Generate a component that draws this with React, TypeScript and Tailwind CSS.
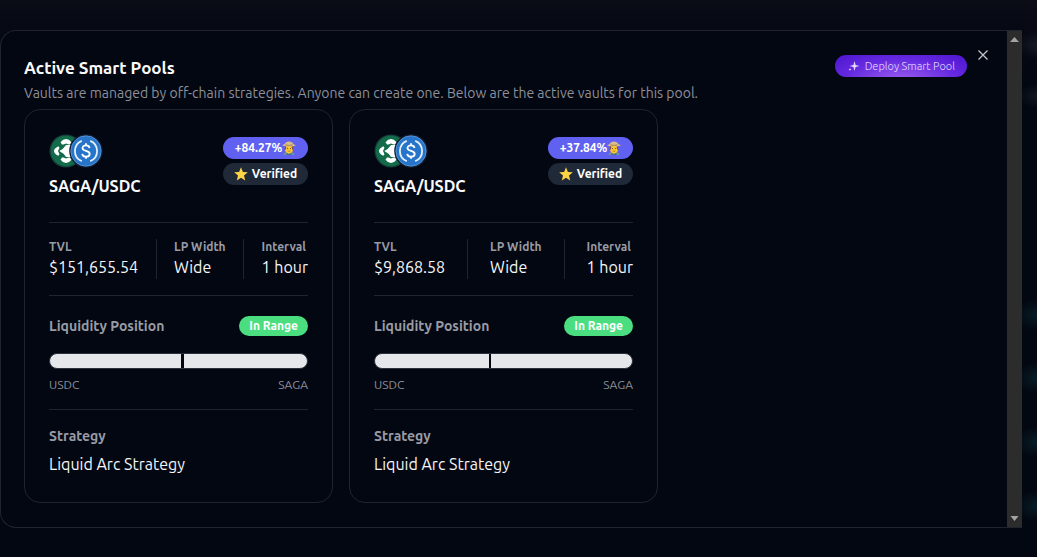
import React from "react";

type Pool = {
  id: string;
  pair: string;
  apr: string;
  tvl: string;
  width: string;
  interval: string;
  base: string;
  quote: string;
  price: number;
  marker: number;
  strategy: string;
};

const pools: Pool[] = [
  { id: "a", pair: "SAGA/USDC", apr: "+84.27%", tvl: "$151,655.54", width: "Wide", interval: "1 hour", base: "USDC", quote: "SAGA", price: 51, marker: 3, strategy: "Liquid Arc Strategy" },
  { id: "b", pair: "SAGA/USDC", apr: "+37.84%", tvl: "$9,868.58", width: "Wide", interval: "1 hour", base: "USDC", quote: "SAGA", price: 44.4, marker: 2, strategy: "Liquid Arc Strategy" },
];

function SagaLogo() {
  return (
    <svg viewBox="0 0 34 34" className="size-[34px] shrink-0" aria-hidden="true">
      <circle cx="17" cy="17" r="16.5" fill="#173f3b" />
      <circle cx="17" cy="17" r="15.2" fill="#136c49" />
      <path d="M11.500 8.300Q14 5 17 5t5.500 3.300L21 10.500h-1.500L17 9.500l-2.500 1H13Z" fill="#fff" />
      <path d="M11.500 25.700Q14 29 17 29t5.500-3.300L21 23.500h-1.500L17 24.500l-2.500-1H13Z" fill="#fff" />
      <path d="M9.300 12.200Q5 14.500 5 17t4.300 4.800l1.200-1.600L9 17l1.500-3.200Z" fill="#fff" />
      <path d="M17 11h5.500v12H17Q14.500 19 10.300 17 14.500 15 17 11Z" fill="#fff" />
      <path d="M24.700 12.200Q29 14.500 29 17t-4.300 4.800Z" fill="#fff" />
    </svg>
  );
}

function UsdcLogo() {
  return (
    <svg viewBox="0 0 34 34" className="-ml-[14px] size-[34px] shrink-0" aria-hidden="true">
      <circle cx="17" cy="17" r="16.800" fill="#111d31" />
      <circle cx="17" cy="17" r="15.200" fill="#2775ca" stroke="#6ba3df" strokeWidth=".7" />
      <path d="M12.800 6.800a11 11 0 0 0 0 20.400M21.200 6.800a11 11 0 0 1 0 20.400" fill="none" stroke="#e4effb" strokeWidth="1.800" />
      <path d="M20.600 14c-.3-1.700-1.500-2.600-3.600-2.600-2.200 0-3.500 1-3.500 2.600 0 3.900 7.200 1.900 7.200 5.900 0 1.700-1.500 2.700-3.700 2.700s-3.600-1-3.800-2.800M17 9.300v2.200M17 22.500v2.200" fill="none" stroke="#fff" strokeWidth="1.800" />
    </svg>
  );
}

function Farmer() {
  return (
    <svg viewBox="0 0 14 14" className="size-[14px]" aria-hidden="true">
      <path d="M1.500 14q.4-3.600 5.500-3.600t5.500 3.600Z" fill="#6e93a2" />
      <path d="M4.600 11.500 7 13.500l2.400-2V14H4.600z" fill="#44677a" />
      <path d="M3 4.500h8V9q-.8 3.300-4 3.500Q3.800 12.300 3 9Z" fill="#fbc62f" />
      <path d="M3 5h1.400L4 8l-1.200 1.500zM9.600 5H11l.2 4.500L10 8z" fill="#7a543b" />
      <path d="M0 4.300Q2.800 3.800 3.800 1.600 7-.6 10.200 1.600 11.200 3.800 14 4.300 11.500 6 7 5.200 2.500 6 0 4.300Z" fill="#d9bd8b" />
      <path d="M3.500 3.300q3.500 1.200 7 0v.9q-3.500 1-7 0Z" fill="#a8814f" />
      <circle cx="5.600" cy="7.500" r=".55" fill="#5a4129" />
      <circle cx="8.400" cy="7.500" r=".55" fill="#5a4129" />
      <path d="M5.600 9.900q1.400.9 2.800 0" fill="none" stroke="#8b6224" strokeWidth=".6" />
    </svg>
  );
}

function Star() {
  return (
    <svg viewBox="0 0 14 14" className="size-[14px]" aria-hidden="true">
      <path d="m7 .3 1.900 4.600 4.900.4L10 8.500l1.200 5L7 10.800l-4.200 2.700L4 8.500.2 5.300l4.900-.4Z" fill="#fdd446" />
    </svg>
  );
}

function Stat({ label, value }: { label: string; value: string }) {
  return (
    <div>
      <dt className="text-xs leading-4 font-semibold text-[#989ba5]">{label}</dt>
      <dd className="text-base leading-6 text-[#f5f6f8]">{value}</dd>
    </div>
  );
}

function PoolCard({ pool }: { pool: Pool }) {
  return (
    <article className="rounded-2xl border border-[#20242e] p-6">
      <header className="flex items-start justify-between">
        <div>
          <div className="flex">
            <SagaLogo />
            <UsdcLogo />
          </div>
          <h3 className="mt-1 text-base leading-7 font-semibold text-[#f9fafb]">{pool.pair}</h3>
        </div>
        <div className="mt-[3px] flex w-[85px] flex-col gap-1 text-xs leading-[22px] font-semibold text-white">
          <span className="flex items-center justify-center rounded-full bg-[#6060f1]">
            {pool.apr}
            <Farmer />
          </span>
          <span className="flex items-center justify-center gap-1 rounded-full bg-[#1f2937]">
            <Star />
            Verified
          </span>
        </div>
      </header>
      <dl className="mt-[22px] flex justify-between border-y border-[#20242e] py-4">
        <Stat label="TVL" value={pool.tvl} />
        <div className="w-px bg-[#20242e]" />
        <Stat label="LP Width" value={pool.width} />
        <div className="w-px bg-[#20242e]" />
        <Stat label="Interval" value={pool.interval} />
      </dl>
      <div className="mt-5 flex items-center justify-between">
        <h4 className="text-sm leading-5 font-semibold text-[#989ba5]">Liquidity Position</h4>
        <span className="rounded-full bg-[#4ade80] px-[10px] text-xs leading-5 font-semibold text-white">In Range</span>
      </div>
      <div className="mt-[17px] flex h-4 overflow-hidden rounded-full border border-[#2b303a] bg-[#e5e7eb]">
        <div style={{ width: `${pool.price}%` }} />
        <div className="bg-[#030711]" style={{ width: pool.marker }} />
      </div>
      <div className="mt-2 flex justify-between text-xs leading-4 text-[#8d909b]">
        <span>{pool.base}</span>
        <span>{pool.quote}</span>
      </div>
      <div className="mt-4 border-t border-[#20242e] pt-4">
        <h4 className="text-sm leading-5 font-semibold text-[#989ba5]">Strategy</h4>
        <p className="mt-1 text-base leading-7 text-[#f5f6f8]">{pool.strategy}</p>
      </div>
    </article>
  );
}

export default function App() {
  return (
    <main className="min-h-screen bg-[radial-gradient(20px_14px_at_100%_45px,#161a25,transparent),radial-gradient(20px_12px_at_100%_96px,#131722,transparent),radial-gradient(24px_16px_at_100%_315px,#071c26,transparent),radial-gradient(24px_16px_at_100%_378px,#071c26,transparent),radial-gradient(24px_16px_at_100%_442px,#071c26,transparent),radial-gradient(24px_16px_at_100%_506px,#071c26,transparent),linear-gradient(180deg,#0a0c16_0px,#060914_30px,#030711_80px)] pt-[30px] pr-[15px] font-['Ubuntu','Noto_Sans',sans-serif]">
      <section role="dialog" aria-labelledby="pools-title" className="relative flex overflow-hidden rounded-l-2xl border border-r-0 border-[#20242e] bg-[#030711]">
        <div className="min-w-0 flex-1 py-6 pr-6 pl-[23px]">
          <header className="flex items-start justify-between">
            <div>
              <h2 id="pools-title" className="text-[17px] leading-[26px] font-semibold text-[#f9fafb]">Active Smart Pools</h2>
              <p className="text-sm leading-6 text-[#8d909b]">
                Vaults are managed by off-chain strategies. Anyone can create one. Below are the active vaults for this pool.
              </p>
            </div>
            <button type="button" className="mr-4 flex h-[22px] items-center gap-1 rounded-full bg-[radial-gradient(ellipse_at_50%_120%,#9c5ff0_0%,#6429df_60%,#4d14cf_100%)] px-3 text-[11px] font-light whitespace-nowrap text-[#e4d9ff]">
              <svg viewBox="0 0 14 14" className="size-[14px]" fill="currentColor" aria-hidden="true">
                <path d="m7.500 2 1.100 3.900L12.500 7 8.600 8.100 7.500 12 6.400 8.100 2.500 7l3.900-1.100ZM3 9l.4 1.100 1.100.4-1.100.4L3 12l-.4-1.100-1.100-.4 1.100-.4Z" />
              </svg>
              Deploy Smart Pool
            </button>
          </header>
          <div className="mt-1 grid grid-cols-3 gap-4">
            {pools.map((pool) => (
              <PoolCard key={pool.id} pool={pool} />
            ))}
          </div>
        </div>
        <div className="flex w-[15px] shrink-0 flex-col items-center justify-between bg-[#2c2c2c] py-[6px]" aria-hidden="true">
          <svg viewBox="0 0 9 6" className="h-[6px] w-[9px]"><path d="M4.500 0 9 5H0Z" fill="#a3a3a3" /></svg>
          <svg viewBox="0 0 9 6" className="h-[6px] w-[9px]"><path d="M4.500 6 8.500 1H.5Z" fill="#a3a3a3" /></svg>
        </div>
        <button type="button" aria-label="Close" className="absolute top-4 right-[31px] flex size-4 items-center justify-center text-[#c4c6cc]">
          <svg viewBox="0 0 12 12" className="size-3" fill="none" stroke="currentColor" strokeWidth="1.300" aria-hidden="true">
            <path d="m1.500 1.500 9 9m0-9-9 9" />
          </svg>
        </button>
      </section>
    </main>
  );
}
